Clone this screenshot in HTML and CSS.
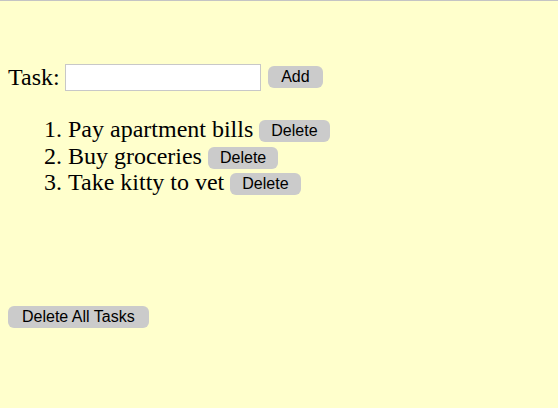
FILE: index.html
```html
<!DOCTYPE html>
<html>
<head>
<meta charset="utf-8">
<link rel="stylesheet" href="styles.css">
</head>
<body>
<div class="page">
  <div class="task-row">
    <label class="task-label" for="task">Task:</label>
    <input id="task" class="task-input" type="text">
    <button class="btn btn-add">Add</button>
  </div>
  <ol class="tasks">
    <li>Pay apartment bills <button class="btn">Delete</button></li>
    <li>Buy groceries <button class="btn">Delete</button></li>
    <li>Take kitty to vet <button class="btn">Delete</button></li>
  </ol>
  <button class="btn btn-all">Delete All Tasks</button>
</div>
</body>
</html>
```
FILE: styles.css
```css
html {
  background: #ffffcc;
  border-top: 1px solid #c4c4c4;
  height: 100%;
  box-sizing: border-box;
}
body {
  margin: 0;
  padding: 0 8px;
  font-family: "Liberation Serif", "Times New Roman", serif;
  font-size: 24px;
  color: #000;
}
.page {
  padding-top: 62px;
}
.task-row {
  display: flex;
  align-items: center;
  height: 28px;
}
.task-label {
  margin-right: 5px;
}
.task-input {
  width: 196px;
  height: 27px;
  box-sizing: border-box;
  border: 1px solid #c8c8c8;
  background: #fff;
  margin: 0 7px 0 0;
  padding: 2px 4px;
  font-size: 14px;
}
.btn {
  font-family: "Liberation Sans", Arial, sans-serif;
  font-size: 16px;
  color: #000;
  background: #cbcbcb;
  border: none;
  border-radius: 6px;
  height: 22px;
  padding: 0 12px;
  line-height: 22px;
  vertical-align: middle;
}
.btn-add {
  padding: 0 13.5px;
}
.tasks {
  margin: 25px 0 0;
  padding-left: 60px;
  line-height: 26.5px;
}
.btn-all {
  display: block;
  margin-top: 110px;
  padding: 0 14px;
}
```
